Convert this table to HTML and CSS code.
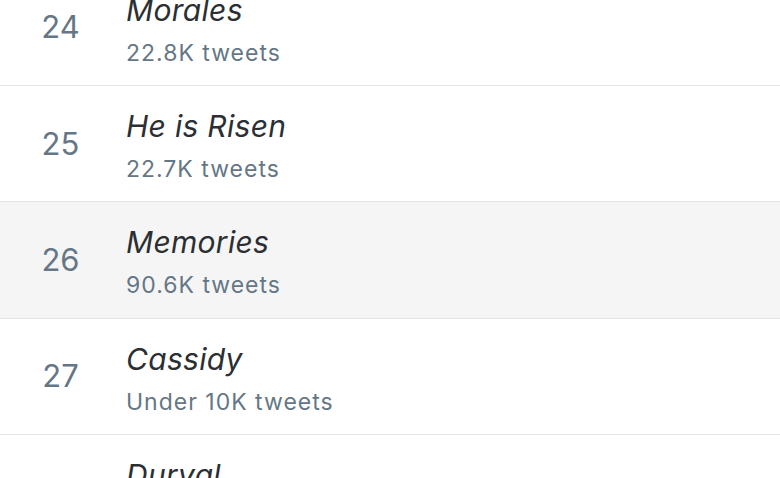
FILE: index.html
```html
<!DOCTYPE html>
<html lang="en">
<head>
<meta charset="utf-8">
<title>Trends</title>
<link rel="stylesheet" href="styles.css">
</head>
<body>
<ul class="trends">
  <li class="trend">
    <span class="rank">24</span>
    <div class="info">
      <div class="name">Morales</div>
      <div class="count">22.8K tweets</div>
    </div>
  </li>
  <li class="trend">
    <span class="rank">25</span>
    <div class="info">
      <div class="name">He is Risen</div>
      <div class="count">22.7K tweets</div>
    </div>
  </li>
  <li class="trend trend-hover">
    <span class="rank">26</span>
    <div class="info">
      <div class="name">Memories</div>
      <div class="count">90.6K tweets</div>
    </div>
  </li>
  <li class="trend">
    <span class="rank">27</span>
    <div class="info">
      <div class="name">Cassidy</div>
      <div class="count">Under 10K tweets</div>
    </div>
  </li>
  <li class="trend">
    <span class="rank">28</span>
    <div class="info">
      <div class="name">Durval</div>
      <div class="count">Under 10K tweets</div>
    </div>
  </li>
</ul>
</body>
</html>
```
FILE: styles.css
```css
html, body {
  margin: 0;
  padding: 0;
  background: #ffffff;
  overflow: hidden;
}
body {
  font-family: Inter, "Noto Sans", "Liberation Sans", sans-serif;
  -webkit-font-smoothing: antialiased;
}
.trends {
  list-style: none;
  margin: -30.33px 0 0 0;
  padding: 0;
}
.trend {
  display: flex;
  align-items: center;
  height: 116.33px;
  box-sizing: border-box;
  border-bottom: 1px solid #e1e4e8;
}
.trend-hover {
  background: #f5f5f5;
}
.rank {
  width: 121px;
  text-align: center;
  font-size: 31px;
  line-height: 38px;
  color: #657786;
  flex: none;
}
.info {
  margin-left: 5px;
  padding-top: 4px;
}
.name {
  font-size: 30px;
  line-height: 38px;
  font-style: italic;
  letter-spacing: 0.3px;
  color: #2b2f33;
}
.count {
  margin-top: 10px;
  font-size: 23px;
  line-height: 29px;
  letter-spacing: 1px;
  color: #657786;
}
```
